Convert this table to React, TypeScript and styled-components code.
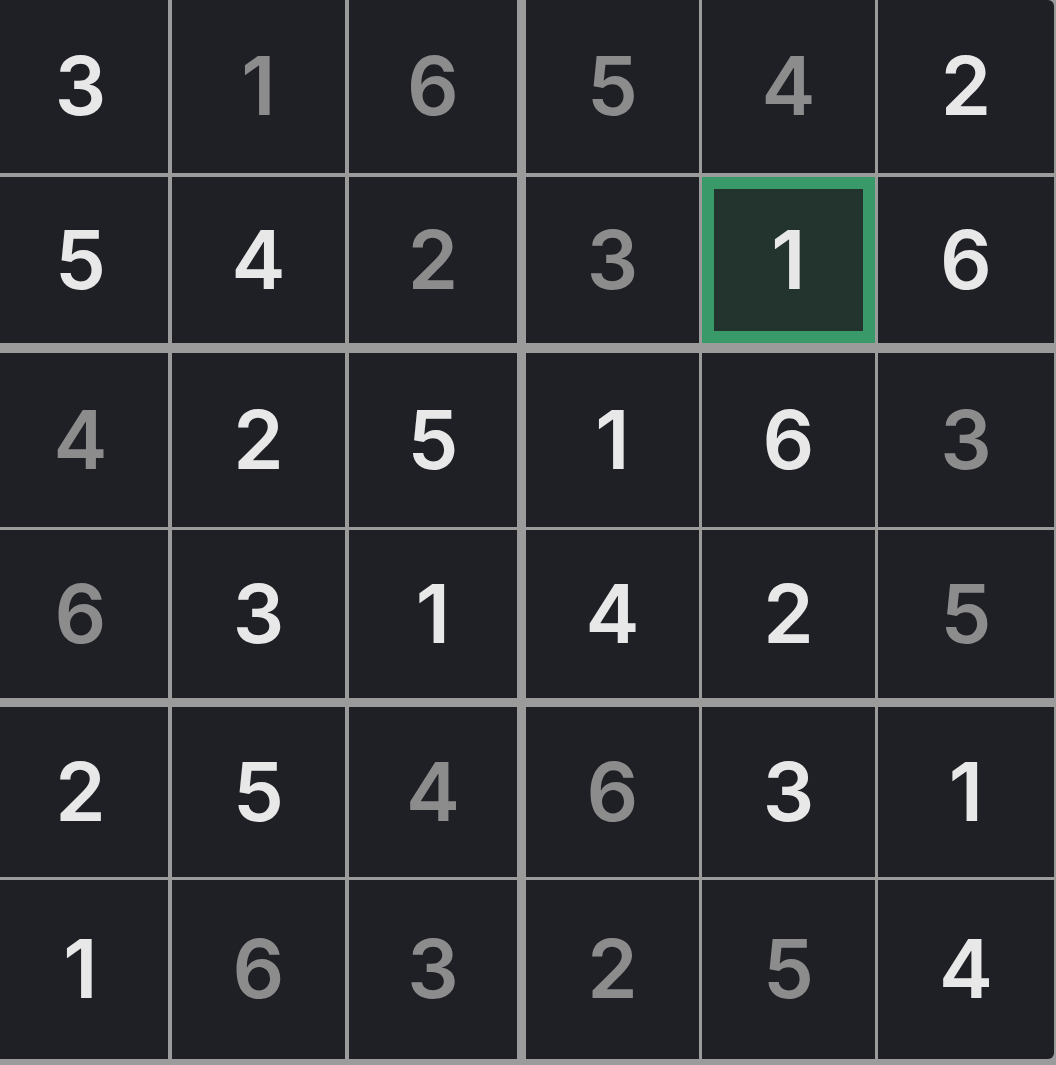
import React from "react";
import styled, { createGlobalStyle, css } from "styled-components";

const GlobalStyle = createGlobalStyle`
  html, body {
    margin: 0;
    padding: 0;
    background: #9b9b9b;
    overflow: hidden;
  }
  body {
    font-family: Inter, "Noto Sans", "Liberation Sans", sans-serif;
  }
`;

const Board = styled.div`
  display: grid;
  grid-template-columns: 175px 4px 173px 4px 168px 9px 173px 3px 173px 3px 176px;
  grid-template-rows: 173px 4px 166px 10px 174px 3px 168px 9px 170px 3px 179px;
  width: 1061px;
  height: 1059px;
  margin-left: -7px;
  background: #9b9b9b;
`;

const Cell = styled.div<{
  $row: number;
  $col: number;
  $given: boolean;
  $selected: boolean;
  $corner?: "tr" | "br" | null;
}>`
  grid-column: ${(p) => p.$col * 2 + 1};
  grid-row: ${(p) => p.$row * 2 + 1};
  box-sizing: border-box;
  display: flex;
  align-items: center;
  justify-content: center;
  background: #1e2025;
  color: ${(p) => (p.$given ? "#e8e8e8" : "#8c8c8c")};
  font-size: 81px;
  font-weight: 600;
  line-height: 1;
  user-select: none;
  ${(p) =>
    p.$selected &&
    css`
      background: #23332d;
      border: 12px solid #3a9968;
    `}
  ${(p) => p.$corner === "tr" && css`border-top-right-radius: 6px;`}
  ${(p) => p.$corner === "br" && css`border-bottom-right-radius: 6px;`}
`;

// W = given (bright), G = filled (dim)
const grid: [number, "W" | "G"][][] = [
  [[3, "W"], [1, "G"], [6, "G"], [5, "G"], [4, "G"], [2, "W"]],
  [[5, "W"], [4, "W"], [2, "G"], [3, "G"], [1, "W"], [6, "W"]],
  [[4, "G"], [2, "W"], [5, "W"], [1, "W"], [6, "W"], [3, "G"]],
  [[6, "G"], [3, "W"], [1, "W"], [4, "W"], [2, "W"], [5, "G"]],
  [[2, "W"], [5, "W"], [4, "G"], [6, "G"], [3, "W"], [1, "W"]],
  [[1, "W"], [6, "G"], [3, "G"], [2, "G"], [5, "G"], [4, "W"]],
];

const selected = { row: 1, col: 4 };

export default function App() {
  return (
    <>
      <GlobalStyle />
      <Board>
        {grid.map((row, r) =>
          row.map(([value, kind], c) => (
            <Cell
              key={`${r}-${c}`}
              $row={r}
              $col={c}
              $given={kind === "W"}
              $selected={r === selected.row && c === selected.col}
              $corner={c === 5 && r === 0 ? "tr" : c === 5 && r === 5 ? "br" : null}
            >
              {value}
            </Cell>
          ))
        )}
      </Board>
    </>
  );
}
